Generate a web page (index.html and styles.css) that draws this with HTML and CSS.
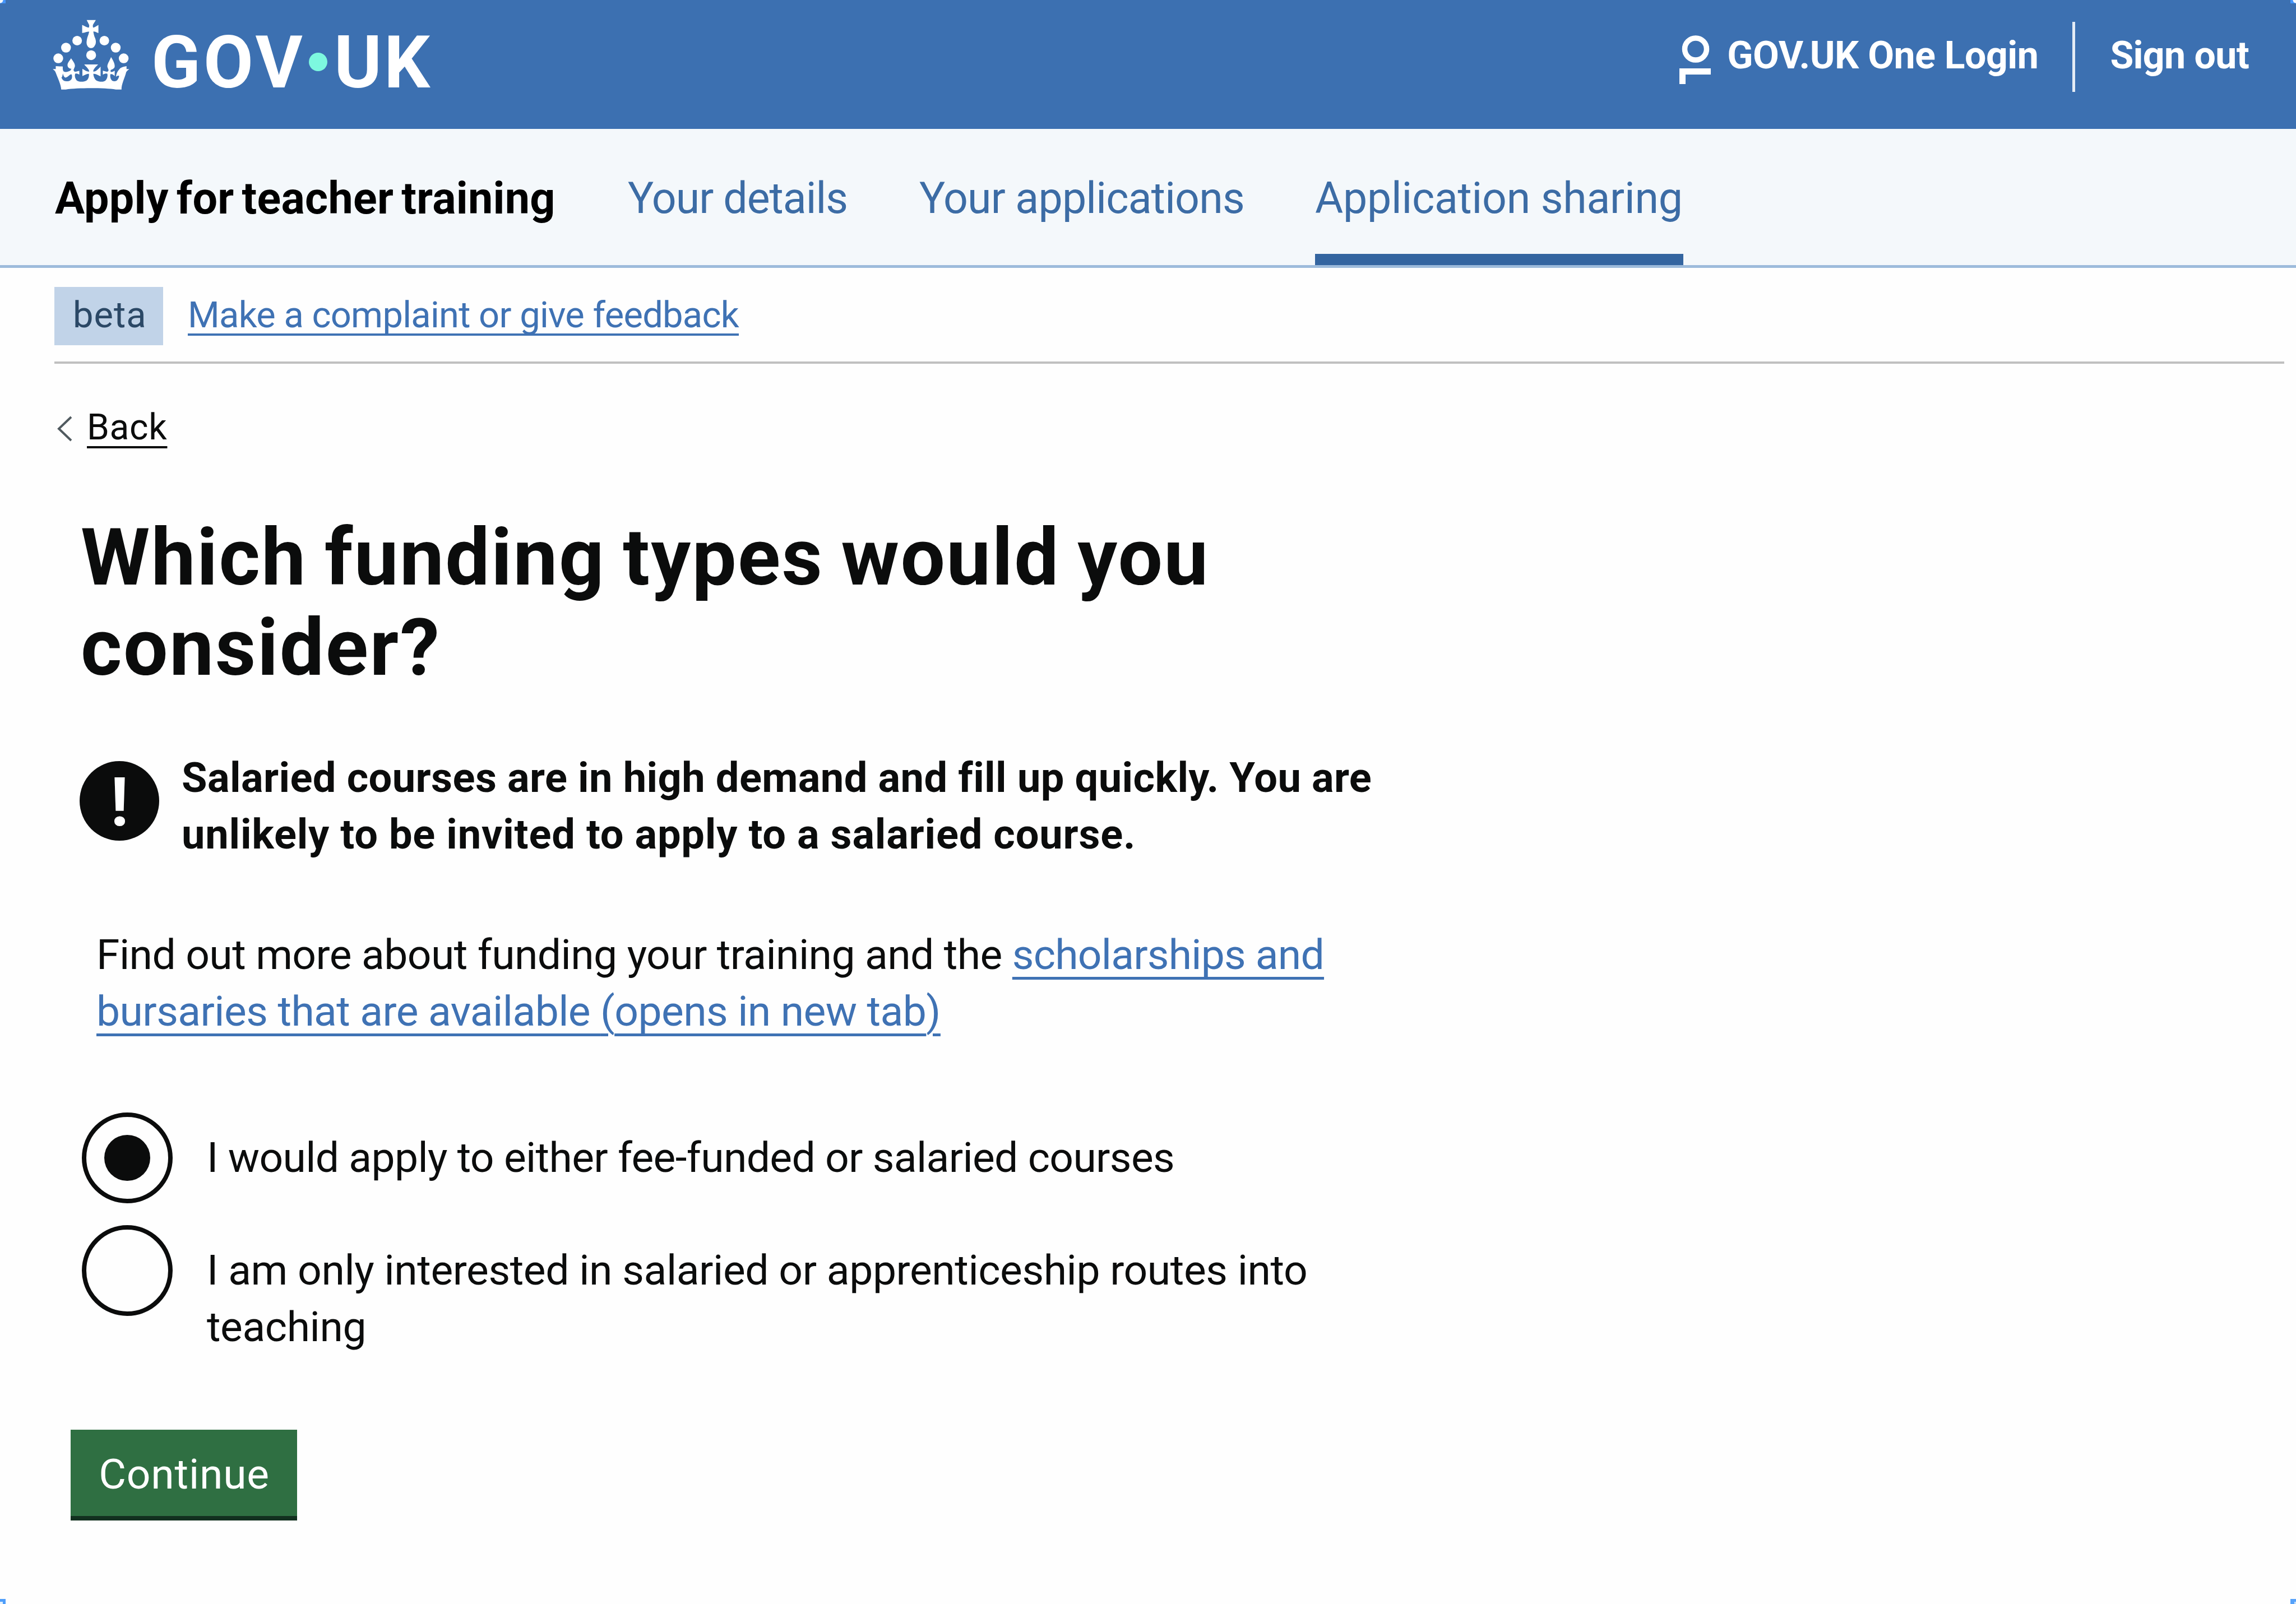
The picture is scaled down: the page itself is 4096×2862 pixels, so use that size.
FILE: index.html
```html
<!DOCTYPE html>
<html lang="en">
<head>
<meta charset="utf-8">
<title>Which funding types would you consider?</title>
<link rel="stylesheet" href="styles.css">
</head>
<body>
<header class="header">
  <a class="logo">
    <svg class="crown" viewBox="45 50 675 615" aria-hidden="true">
      <g fill="#fff">
        <path d="M344 53H424C415 72 404 82 398 98C398 108 398 114 400 120C415 118 430 104 447 96V168C430 162 418 152 402 154C406 178 410 195 418 212C426 232 426 250 422 264C412 290 398 300 382 300C362 300 348 284 344 264C340 246 346 224 350 206C356 190 362 174 366 156C350 154 336 162 304 168V96C328 104 340 118 364 120C366 112 366 106 366 98C360 82 352 72 344 53Z"/>
        <circle cx="260" cy="234" r="42"/>
        <circle cx="499" cy="234" r="42"/>
        <circle cx="162" cy="296" r="43"/>
        <circle cx="599" cy="296" r="43"/>
        <circle cx="94" cy="390" r="43"/>
        <circle cx="669" cy="390" r="43"/>
        <circle cx="383" cy="362" r="43"/>
        <path d="M206 390C226 418 244 440 240 462L228 492C230 502 236 508 242 508C258 508 266 500 279 500V534C264 524 252 522 242 526C236 546 242 566 256 584C276 600 322 598 344 584C358 572 366 552 364 526C348 524 330 534 306 546V482C330 496 348 510 366 506C366 486 340 466 322 444H444C424 466 400 486 402 506C420 508 438 494 466 462V548C438 534 420 524 402 526C404 552 414 572 428 584C452 598 494 600 510 584C524 568 530 546 526 526C514 522 502 524 486 534V498C500 502 512 508 524 508C532 506 536 500 536 492L526 466C522 440 544 416 558 378C578 412 592 436 590 462C588 478 572 486 556 492C552 500 552 506 558 510C572 510 580 504 590 498V546C578 532 566 526 552 530C548 552 554 576 570 588C590 596 608 590 618 574C626 560 630 552 628 544C618 540 610 546 602 552C604 520 618 500 640 476C652 468 668 462 694 458V484H718C700 498 690 506 688 522C676 566 648 620 650 664H600C500 648 266 648 160 664H120C118 620 88 560 72 516C68 502 60 496 46 484H72V458C98 460 116 460 134 462C132 480 134 494 140 504C160 516 176 508 200 498L210 482C186 478 172 468 176 440C182 420 196 410 206 390ZM134 522C132 540 130 550 122 560C132 580 140 590 156 590C184 596 206 586 214 564C216 548 216 540 210 530C192 530 182 556 156 560C142 552 138 536 134 522Z" fill-rule="evenodd"/>
      </g>
    </svg>
    <span class="wordmark">GOV</span><span class="dot"></span><span class="wordmark wordmark-uk">UK</span>
  </a>
  <nav class="account">
    <a class="one-login">
      <svg class="person" viewBox="0 0 56 88" aria-hidden="true">
        <circle cx="29" cy="24.500" r="19.500" fill="none" stroke="#fff" stroke-width="9.500"/>
        <path d="M5.500 87V64.500H56" fill="none" stroke="#fff" stroke-width="11"/>
      </svg>
      <span>GOV.UK One Login</span>
    </a>
    <span class="divider"></span>
    <a class="sign-out">Sign out</a>
  </nav>
</header>
<nav class="service-nav">
  <span class="service-name">Apply for teacher training</span>
  <a class="nav-link nav-details">Your details</a>
  <a class="nav-link nav-applications">Your applications</a>
  <a class="nav-link nav-sharing">Application sharing</a>
</nav>
<div class="phase">
  <strong class="tag">beta</strong>
  <a class="feedback">Make a complaint or give feedback</a>
</div>
<div class="back">
  <svg class="chevron" viewBox="0 0 28 46" aria-hidden="true"><path d="M25 2L3 23L25 44" fill="none" stroke="#505a5f" stroke-width="4"/></svg>
  <a class="back-link">Back</a>
</div>
<main class="main">
  <h1 class="title">Which funding types would you<br><span class="title-end">consider?</span></h1>
  <div class="warning">
    <span class="warning-icon">!</span>
    <strong class="warning-text">Salaried courses are in high demand and fill up quickly. You are<br><span class="warning-end">unlikely to be invited to apply to a salaried course.</span></strong>
  </div>
  <p class="info">Find out more about funding your training and the <a class="link"><span class="link-start">scholarships and</span><br>bursaries that are available <span class="paren">(</span>opens in new tab<span class="paren">)</span></a></p>
  <div class="radios">
    <label class="radio"><span class="ring"><span class="bullet"></span></span><span class="label label-either">I would apply to either fee-funded or salaried courses</span></label>
    <label class="radio"><span class="ring"></span><span class="label">I am only interested in salaried or apprenticeship routes into<br>teaching</span></label>
  </div>
  <button class="button" type="button">Continue</button>
</main>
<span class="handle handle-tl"></span>
<span class="handle handle-tr"></span>
<span class="handle handle-bl"></span>
<span class="handle handle-br"></span>
</body>
</html>
```
FILE: styles.css
```css
* { box-sizing: border-box; }

body {
  position: relative;
  width: 4096px;
  height: 2862px;
  margin: 0;
  overflow: hidden;
  background: #fefefe;
  color: #0b0c0c;
  font-family: Roboto, "Liberation Sans", sans-serif;
  font-size: 75px;
}

/* Header */
.header {
  display: flex;
  justify-content: space-between;
  align-items: flex-start;
  height: 230px;
  padding: 0 84px 0 94px;
  background: #3c70b1;
  color: #fff;
  font-weight: 700;
}

.logo {
  display: flex;
  align-items: flex-start;
}

.crown {
  width: 137px;
  height: 125px;
  margin-top: 35px;
}

.wordmark {
  width: 281px;
  margin: 48px 0 0 39px;
  font-size: 129px;
  line-height: 128px;
  letter-spacing: 5px;
}

.dot {
  width: 33px;
  height: 33px;
  margin-top: 94px;
  border-radius: 50%;
  background: #7df8df;
}

.wordmark-uk {
  width: auto;
  margin-left: 12px;
  letter-spacing: 4px;
}

.account {
  display: flex;
  align-items: flex-start;
  font-size: 68px;
  line-height: 68px;
}

.one-login {
  display: flex;
  align-items: flex-start;
  margin-right: 61px;
  letter-spacing: -0.5px;
}

.one-login span { margin-top: 65px; }

.person {
  width: 56px;
  height: 88px;
  margin: 63px 29px 0 0;
}

.divider {
  width: 5px;
  height: 125px;
  margin-top: 39px;
  background: #e4ecf5;
}

.sign-out {
  margin: 65px 0 0 62px;
  letter-spacing: -0.7px;
}

/* Service navigation */
.service-nav {
  display: flex;
  height: 248px;
  padding-left: 98px;
  border-bottom: 5px solid #9dbbdb;
  background: #f4f8fb;
  line-height: 80px;
}

.service-name {
  width: 1022px;
  padding-top: 84px;
  color: #000;
  font-size: 79px;
  font-weight: 700;
  letter-spacing: 0.3px;
  word-spacing: -6px;
}

.nav-link {
  padding-top: 84px;
  color: #3c6ca5;
  font-size: 77px;
}

.nav-details {
  width: 520px;
  letter-spacing: -1px;
}

.nav-applications {
  width: 706px;
  letter-spacing: -0.8px;
}

.nav-sharing {
  width: 657px;
  border-bottom: 20px solid #3465a0;
  letter-spacing: -0.25px;
  white-space: nowrap;
}

/* Phase banner */
.phase {
  display: flex;
  align-items: flex-start;
  height: 171px;
  margin: 0 21px 0 97px;
  padding-top: 34px;
  border-bottom: 4px solid #c0c0c0;
  line-height: 64px;
}

.tag {
  width: 194px;
  height: 104px;
  padding: 18px 0 0 33px;
  background: #c1d3e8;
  color: #2b4866;
  font-size: 65px;
  font-weight: 400;
  letter-spacing: 1px;
}

.feedback {
  margin: 18px 0 0 44px;
  color: #3f72b4;
  font-size: 65px;
  letter-spacing: -0.72px;
  text-decoration: underline 4px;
  text-decoration-skip-ink: none;
  text-underline-offset: 11px;
}

/* Back link */
.back {
  display: flex;
  align-items: flex-start;
  margin: 82px 0 0 102px;
  font-size: 64px;
  line-height: 64px;
}

.chevron {
  width: 28px;
  height: 46px;
  margin-top: 11px;
}

.back-link {
  margin-left: 25px;
  letter-spacing: 0.7px;
  text-decoration: underline 4px;
  text-underline-offset: 12px;
}

/* Question */
.main { padding-top: 119px; }

.title {
  margin: 0 0 0 144px;
  font-size: 141px;
  line-height: 161px;
  letter-spacing: 2.3px;
  word-spacing: -6px;
}

.title-end { letter-spacing: 2.6px; }

.warning {
  display: flex;
  align-items: flex-start;
  margin: 101px 0 0 142px;
}

.warning-icon {
  width: 142px;
  height: 142px;
  margin-top: 21px;
  border-radius: 50%;
  background: #0b0c0c;
  color: #fff;
  font-size: 121px;
  font-weight: 700;
  line-height: 148px;
  text-align: center;
}

.warning-text {
  margin-left: 40px;
  font-size: 74px;
  line-height: 101px;
  letter-spacing: 0.4px;
}

.warning-end { letter-spacing: 0.8px; }

.info {
  margin: 114px 0 0 172px;
  line-height: 100.5px;
  letter-spacing: -0.57px;
}

.link {
  color: #3f72b4;
  text-decoration: underline 5px;
  text-decoration-skip-ink: none;
  text-underline-offset: 14px;
}

.link-start { letter-spacing: -0.78px; }
.paren { text-decoration-skip-ink: auto; }

.radios {
  display: flex;
  flex-direction: column;
  gap: 39px;
  margin: 131px 0 0 146px;
}

.radio {
  display: flex;
  align-items: flex-start;
}

.ring {
  display: flex;
  align-items: center;
  justify-content: center;
  width: 162px;
  height: 162px;
  border: 8px solid #0b0c0c;
  border-radius: 50%;
}

.bullet {
  width: 82px;
  height: 82px;
  border-radius: 50%;
  background: #0b0c0c;
}

.label {
  margin: 30px 0 0 61px;
  line-height: 101px;
  letter-spacing: -0.42px;
}

.label-either { letter-spacing: -0.66px; }

.button {
  display: block;
  width: 404px;
  height: 162px;
  margin: 133px 0 0 126px;
  padding: 0 0 0 1px;
  border: 0;
  border-bottom: 8px solid #12301f;
  background: #2f6f42;
  color: #fff;
  font: inherit;
  line-height: 158px;
  letter-spacing: 0.8px;
}

/* Selection handles over the corners */
.handle {
  position: absolute;
  width: 10px;
  height: 6px;
  background: #4595fb;
}

.handle-tl { top: 0; left: 0; background: radial-gradient(circle at 0 0, #f4f8fb 5px, #4595fb 6px); }
.handle-tr { top: 0; right: 0; background: radial-gradient(circle at 100% 0, #f4f8fb 5px, #4595fb 6px); }
.handle-bl { bottom: 0; left: 0; height: 9px; background: linear-gradient(#e4f1fd, #e4f1fd) 0 100% / 5px 4px no-repeat #4f9efa; }
.handle-br { bottom: 0; right: 0; height: 9px; background: linear-gradient(#c4e0fd, #c4e0fd) 100% 100% / 3px 4px no-repeat #57a2fa; }
```
